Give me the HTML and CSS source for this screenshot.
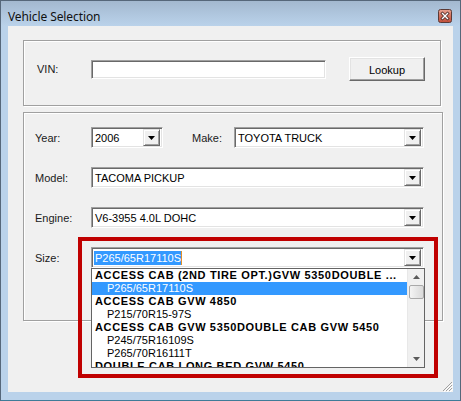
FILE: index.html
```html
<!DOCTYPE html>
<html>
<head>
<meta charset="utf-8">
<link rel="stylesheet" href="styles.css">
</head>
<body>
<div class="window">
  <div class="titlebar">
    <span class="title">Vehicle Selection</span>
    <span class="close">
      <svg width="14" height="14" viewBox="0 0 14 14">
        <defs>
          <linearGradient id="cg" x1="0" y1="0" x2="0" y2="1">
            <stop offset="0" stop-color="#e9a493"/>
            <stop offset="0.5" stop-color="#d2705c"/>
            <stop offset="1" stop-color="#c24f3a"/>
          </linearGradient>
        </defs>
        <rect x="0.5" y="0.5" width="13" height="13" rx="2" fill="url(#cg)" stroke="#5a3a36"/>
        <path d="M4.5 4.5 L9.5 9.5 M9.5 4.5 L4.5 9.5" stroke="#4a2a26" stroke-width="3" stroke-linecap="square"/>
        <path d="M4.5 4.5 L9.5 9.5 M9.5 4.5 L4.5 9.5" stroke="#ffffff" stroke-width="1.4" stroke-linecap="square"/>
      </svg>
    </span>
  </div>
  <div class="client">
    <div class="group group-vin">
      <div class="vin-row">
        <span class="lbl lbl-vin">VIN:</span>
        <div class="textbox"></div>
        <div class="button">Lookup</div>
      </div>
    </div>
    <div class="group group-vehicle">
      <div class="row">
        <span class="lbl">Year:</span>
        <div class="combo combo-year">
          <span class="val">2006</span>
          <span class="drop"><svg width="7" height="4" viewBox="0 0 7 4"><path d="M0 0 H7 L3.5 4 Z" fill="#000"/></svg></span>
        </div>
        <span class="lbl lbl-make">Make:</span>
        <div class="combo combo-make">
          <span class="val">TOYOTA TRUCK</span>
          <span class="drop"><svg width="7" height="4" viewBox="0 0 7 4"><path d="M0 0 H7 L3.5 4 Z" fill="#000"/></svg></span>
        </div>
      </div>
      <div class="row">
        <span class="lbl">Model:</span>
        <div class="combo combo-wide">
          <span class="val">TACOMA PICKUP</span>
          <span class="drop"><svg width="7" height="4" viewBox="0 0 7 4"><path d="M0 0 H7 L3.5 4 Z" fill="#000"/></svg></span>
        </div>
      </div>
      <div class="row">
        <span class="lbl">Engine:</span>
        <div class="combo combo-wide">
          <span class="val">V6-3955 4.0L DOHC</span>
          <span class="drop"><svg width="7" height="4" viewBox="0 0 7 4"><path d="M0 0 H7 L3.5 4 Z" fill="#000"/></svg></span>
        </div>
      </div>
      <div class="row">
        <span class="lbl">Size:</span>
        <div class="combo combo-wide combo-size">
          <span class="val"><span class="seltext">P265/65R17110S</span></span>
          <span class="drop"><svg width="7" height="4" viewBox="0 0 7 4"><path d="M0 0 H7 L3.5 4 Z" fill="#000"/></svg></span>
          <div class="listbox">
            <div class="items">
              <div class="item grp">ACCESS CAB (2ND TIRE OPT.)GVW 5350DOUBLE ...</div>
              <div class="item sub selected">P265/65R17110S</div>
              <div class="item grp">ACCESS CAB GVW 4850</div>
              <div class="item sub">P215/70R15-97S</div>
              <div class="item grp">ACCESS CAB GVW 5350DOUBLE CAB GVW 5450</div>
              <div class="item sub">P245/75R16109S</div>
              <div class="item sub">P265/70R16111T</div>
              <div class="item grp">DOUBLE CAB LONG BED GVW 5450</div>
            </div>
            <div class="vscroll">
              <span class="arrow"><svg width="7" height="4" viewBox="0 0 7 4"><path d="M0 4 H7 L3.5 0 Z" fill="#5a5a5a"/></svg></span>
              <span class="thumb"></span>
              <span class="track"></span>
              <span class="arrow"><svg width="7" height="4" viewBox="0 0 7 4"><path d="M0 0 H7 L3.5 4 Z" fill="#5a5a5a"/></svg></span>
            </div>
          </div>
        </div>
      </div>
    </div>
    <span class="grip">
      <svg width="12" height="12" viewBox="0 0 12 12">
        <path d="M11 2 L2 11 M11 5 L5 11 M11 8 L8 11" stroke="#a0a0a0" stroke-width="1"/>
        <path d="M12 3 L3 12 M12 6 L6 12 M12 9 L9 12" stroke="#ffffff" stroke-width="1"/>
      </svg>
    </span>
  </div>
  <div class="callout"></div>
</div>
</body>
</html>
```
FILE: styles.css
```css
html, body {
  margin: 0;
  padding: 0;
}
body {
  width: 461px;
  height: 401px;
  overflow: hidden;
  font-family: "Liberation Sans", Arial, sans-serif;
  font-size: 11px;
  color: #000;
}
.window {
  position: relative;
  box-sizing: border-box;
  width: 461px;
  height: 401px;
  border: 1px solid #56677a;
  border-bottom-color: #3f7b98;
  background: #bad2ea;
  padding: 0 7px 8px 7px;
  display: flex;
  flex-direction: column;
}
.titlebar {
  height: 25px;
  margin: 0 -7px;
  padding: 0 7px;
  background: linear-gradient(#a3b8cf, #b1c8e0 60%, #bad2ea);
  display: flex;
  align-items: center;
  justify-content: space-between;
}
.title {
  font-family: "Noto Sans", "Open Sans", sans-serif;
  font-size: 12px;
  color: #111;
  padding-top: 6px;
  letter-spacing: -0.1px;
}
.close {
  display: block;
  width: 14px;
  height: 14px;
  margin-top: 5px;
  margin-right: 1px;
}
.close svg { display: block; }
.client {
  position: relative;
  flex: 1;
  background: #f0f0f0;
  padding: 14px 0 0 15px;
  display: flex;
  flex-direction: column;
}
.group {
  box-sizing: border-box;
  border: 1px solid #a0a0a0;
  box-shadow: inset 1px 1px #fff, 1px 1px #fff;
}
.group-vin {
  width: 418px;
  height: 66px;
  padding: 16px 0 0 13px;
}
.group-vehicle {
  width: 420px;
  height: 209px;
  margin-top: 6px;
  padding: 14px 0 0 11px;
  display: flex;
  flex-direction: column;
  gap: 19px;
}
.vin-row, .row {
  display: flex;
  align-items: center;
}
.lbl {
  width: 56px;
  flex: none;
  color: #1a1a1a;
}
.lbl-vin { width: 54px; }
.lbl-make {
  width: 42px;
  margin-left: 29px;
}
.textbox {
  box-sizing: border-box;
  width: 235px;
  height: 19px;
  background: #fff;
  border: 1px solid;
  border-color: #a0a0a0 #fff #fff #a0a0a0;
  box-shadow: inset 1px 1px #696969, inset -1px -1px #e3e3e3;
}
.button {
  box-sizing: border-box;
  width: 76px;
  height: 24px;
  margin-left: 23px;
  background: #f0f0f0;
  border: 1px solid;
  border-color: #fff #696969 #696969 #fff;
  box-shadow: inset -1px -1px #a0a0a0, inset 1px 1px #e3e3e3;
  display: flex;
  align-items: center;
  justify-content: center;
  font-size: 11px;
  padding-top: 1px;
}
.combo {
  position: relative;
  box-sizing: border-box;
  height: 21px;
  background: #fff;
  border: 1px solid;
  border-color: #a0a0a0 #fff #fff #a0a0a0;
  box-shadow: inset 1px 1px #696969, inset -1px -1px #e3e3e3;
  display: flex;
  align-items: center;
  padding: 2px 2px 2px 2px;
}
.combo-year { width: 72px; }
.combo-make { width: 190px; }
.combo-wide { width: 333px; }
.val {
  flex: 1;
  padding-left: 1px;
  white-space: nowrap;
  overflow: hidden;
}
.drop {
  box-sizing: border-box;
  flex: none;
  width: 17px;
  height: 17px;
  background: #f0f0f0;
  border: 1px solid;
  border-color: #e3e3e3 #696969 #696969 #e3e3e3;
  box-shadow: inset 1px 1px #fff, inset -1px -1px #a0a0a0;
  display: flex;
  align-items: center;
  justify-content: center;
}
.drop svg { display: block; }
.seltext {
  display: inline-block;
  background: #3399ff;
  color: #fff;
  line-height: 14px;
  padding: 0 0 0 1px;
  border-right: 1px solid #e0902a;
}
.combo-size .val { padding-left: 0; }
.listbox {
  position: absolute;
  left: -1px;
  top: 20px;
  box-sizing: border-box;
  width: 334px;
  height: 100px;
  background: #fff;
  border: 1px solid #646464;
  display: flex;
  z-index: 2;
}
.items {
  flex: 1;
  overflow: hidden;
}
.item {
  height: 13px;
  line-height: 13px;
  white-space: nowrap;
  overflow: hidden;
}
.item.grp {
  font-weight: bold;
  padding-left: 3px;
  letter-spacing: 0.65px;
}
.item.sub {
  padding-left: 15px;
}
.item.selected {
  background: #3399ff;
  color: #fff;
}
.vscroll {
  width: 16px;
  flex: none;
  background: #f0f0f0;
  border-left: 1px solid #e8e8e8;
  display: flex;
  flex-direction: column;
  align-items: center;
}
.vscroll .arrow {
  height: 16px;
  display: flex;
  align-items: center;
  justify-content: center;
}
.vscroll .arrow svg { display: block; }
.thumb {
  box-sizing: border-box;
  width: 15px;
  height: 14px;
  border: 1px solid #a9a9a9;
  border-radius: 2px;
  background: linear-gradient(to right, #f4f4f4, #e6e6e6 50%, #dadada);
}
.track { flex: 1; }
.grip {
  position: absolute;
  right: 0;
  bottom: 0;
  width: 12px;
  height: 12px;
}
.grip svg { display: block; }
.callout {
  position: absolute;
  left: 77px;
  top: 236px;
  width: 360px;
  height: 141px;
  box-sizing: border-box;
  border: 4px solid #c00000;
  z-index: 3;
  pointer-events: none;
}
```
